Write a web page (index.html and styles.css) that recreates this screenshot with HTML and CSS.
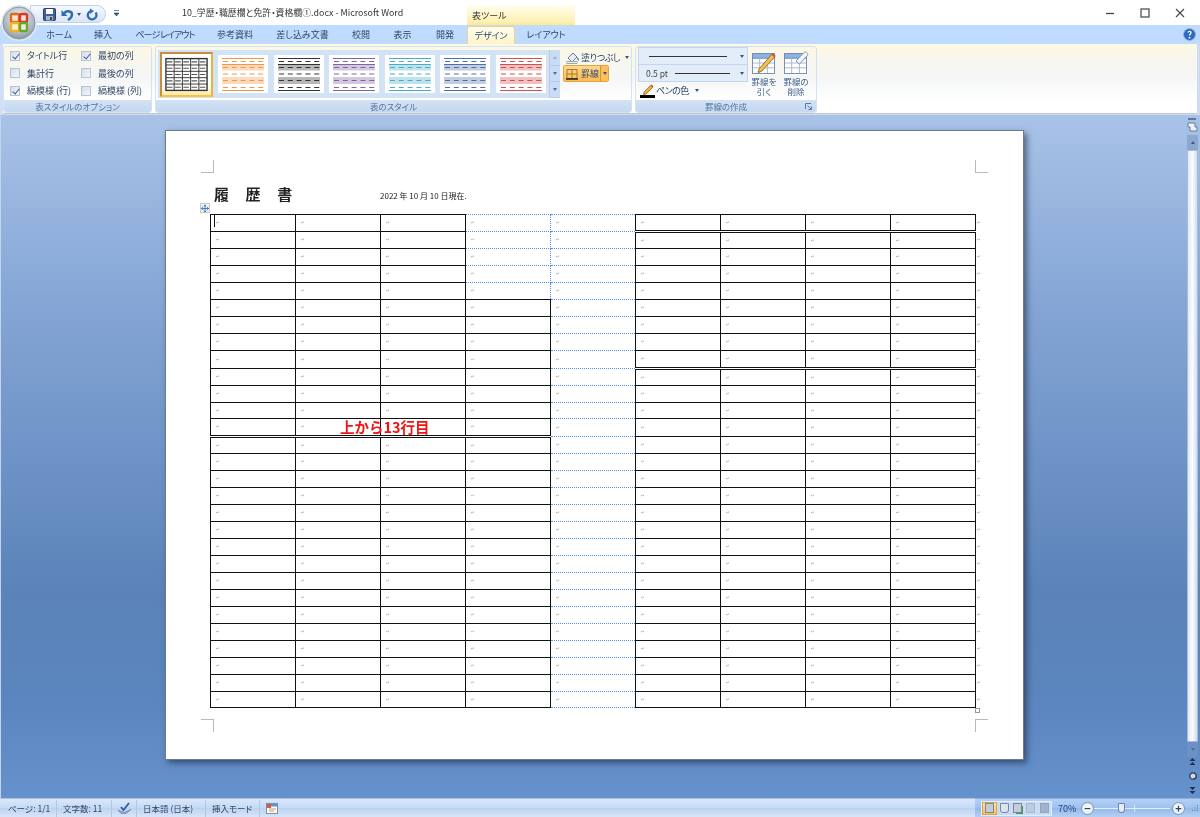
FILE: index.html
```html
<!DOCTYPE html>
<html lang="ja">
<head>
<meta charset="utf-8">
<title>10_学歴・職歴欄と免許・資格欄① - Microsoft Word</title>
<link rel="stylesheet" href="styles.css">
</head>
<body>
<svg class="defs" width="0" height="0" aria-hidden="true">
  <symbol id="banded" viewBox="0 0 50 38">
    <rect x="4" y="9" width="42" height="6.5" fill="currentColor" opacity=".35"/>
    <rect x="4" y="22" width="42" height="7" fill="currentColor" opacity=".35"/>
    <path d="M4 3.5H46M4 9.5H46M4 35.500H46" stroke="currentColor" fill="none"/>
    <path d="M5 6.500H46M5 12.500H46M5 19H46M5 25.500H46M5 32.500H46" stroke="currentColor" stroke-width="1.200" stroke-dasharray="5 3.800" fill="none"/>
  </symbol>
  <symbol id="grid" viewBox="0 0 24 22">
    <rect x=".5" y=".5" width="23" height="21" fill="#fff" stroke="#6f8fb5"/>
    <rect x=".5" y=".5" width="23" height="5" fill="#8fb2e0" stroke="#6f8fb5"/>
    <path d="M8 5V21M16 5V21M1 10.500H23M1 15.500H23" stroke="#a9b6c6" fill="none"/>
  </symbol>
</svg>

<header class="titlebar">
  <div class="qat">
    <svg class="qi" width="13" height="13" viewBox="0 0 13 13"><rect x=".5" y=".5" width="12" height="12" rx="1" fill="#3d5f9e" stroke="#2b3f70"/><rect x="3" y="1" width="7" height="5" fill="#fff"/><rect x="3" y="8" width="7" height="4.500" fill="#a9b4c6"/><rect x="7" y="9" width="2" height="3" fill="#33466e"/></svg>
    <svg class="qi undo" width="13" height="13" viewBox="0 0 13 13"><path d="M3 5.500C5 2 11 2.500 11 6.500C11 9 9.500 10.500 7 12" fill="none" stroke="#2f6db8" stroke-width="2.500"/><path d="M0.500 2V8H6.500Z" fill="#2f6db8"/></svg>
    <span class="caret qc"></span>
    <svg class="qi redo" width="12" height="13" viewBox="0 0 12 13"><path d="M9.500 4.500A4.300 4.300 0 1 1 5 3" fill="none" stroke="#2f6db8" stroke-width="2.300"/><path d="M4 .5V6L8 3Z" fill="#2f6db8"/></svg>
  </div>
  <svg class="qcust" width="7" height="9" viewBox="0 0 7 9"><path d="M1 1.500H6M1 4L3.500 7L6 4Z" fill="#3a5378" stroke="#3a5378" stroke-width=".7"/></svg>
  <div class="doc-title">10_学歴・職歴欄と免許・資格欄①.docx - Microsoft Word</div>
  <div class="ctx-tab">表ツール</div>
  <div class="win-btns">
    <svg width="10" height="10" viewBox="0 0 10 10"><path d="M1 5.500H9" stroke="#444" stroke-width="1.300"/></svg>
    <svg width="10" height="10" viewBox="0 0 10 10"><rect x="1" y="1" width="8" height="8" fill="none" stroke="#444" stroke-width="1.200"/></svg>
    <svg width="10" height="10" viewBox="0 0 10 10"><path d="M1 1L9 9M9 1L1 9" stroke="#444" stroke-width="1.100"/></svg>
  </div>
</header>

<button class="office" aria-label="Office">
  <svg width="38" height="38" viewBox="0 0 38 38">
    <defs>
      <radialGradient id="og" cx=".5" cy=".35" r=".7"><stop offset="0" stop-color="#f2f4f6"/><stop offset=".7" stop-color="#aab4be"/><stop offset="1" stop-color="#7f8c99"/></radialGradient>
    </defs>
    <circle cx="19" cy="19" r="18" fill="#dfe7f0"/>
    <circle cx="19" cy="19" r="16" fill="url(#og)" stroke="#8b97a6"/>
    <rect x="11" y="10" width="8" height="8" rx="1.500" fill="#fbe6d2" stroke="#e2671d" stroke-width="2.400"/>
    <rect x="20" y="10" width="7" height="8" rx="1.500" fill="#f8ded8" stroke="#d63a2a" stroke-width="2.400"/>
    <rect x="11" y="19" width="8" height="8" rx="1.500" fill="#fdf2cf" stroke="#f3b21c" stroke-width="2.400"/>
    <rect x="20" y="19" width="7" height="8" rx="1.500" fill="#e6f1d6" stroke="#6aa62e" stroke-width="2.400"/>
  </svg>
</button>

<nav class="tabs">
  <span class="tab">ホーム</span>
  <span class="tab">挿入</span>
  <span class="tab tab-tight">ページ レイアウト</span>
  <span class="tab">参考資料</span>
  <span class="tab">差し込み文書</span>
  <span class="tab">校閲</span>
  <span class="tab">表示</span>
  <span class="tab">開発</span>
  <span class="tab active">デザイン</span>
  <span class="tab">レイアウト</span>
  <span class="help"><svg width="13" height="13" viewBox="0 0 13 13"><circle cx="6.500" cy="6.500" r="6" fill="#2d6bc0" stroke="#9bb4d6"/><path d="M5 4.500C5.500 3 8 3 8 4.800C8 6 6.500 6 6.500 7.500" fill="none" stroke="#fff" stroke-width="1.300"/><circle cx="6.500" cy="9.700" r=".9" fill="#fff"/></svg></span>
</nav>

<section class="ribbon">
  <div class="group g-opts">
    <div class="g-body opts">
      <label class="opt"><i class="cb on"></i>タイトル行</label>
      <label class="opt"><i class="cb on"></i>最初の列</label>
      <label class="opt"><i class="cb"></i>集計行</label>
      <label class="opt"><i class="cb"></i>最後の列</label>
      <label class="opt"><i class="cb on"></i>縞模様 (行)</label>
      <label class="opt"><i class="cb"></i>縞模様 (列)</label>
    </div>
    <div class="g-label">表スタイルのオプション</div>
  </div>

  <div class="group g-styles">
    <div class="g-body styles">
      <div class="gallery">
        <div class="thumb selected">
          <svg width="46" height="36" viewBox="0 0 46 36">
            <rect x="1" y="1" width="44" height="34" fill="#fff" stroke="#333" stroke-width="1.500"/>
            <path d="M9.800 1V35M18.600 1V35M27.400 1V35M36.200 1V35M1 7.800H45M1 14.600H45M1 21.400H45M1 28.200H45" stroke="#333" fill="none"/>
            <path d="M2 4.500H45M2 11.300H45M2 18H45M2 24.800H45M2 31.600H45" stroke="#555" stroke-width="1.200" stroke-dasharray="6 2.800" fill="none"/>
          </svg>
        </div>
        <svg class="thumb c-orange"><use href="#banded"/></svg>
        <svg class="thumb c-black"><use href="#banded"/></svg>
        <svg class="thumb c-purple"><use href="#banded"/></svg>
        <svg class="thumb c-teal"><use href="#banded"/></svg>
        <svg class="thumb c-blue"><use href="#banded"/></svg>
        <svg class="thumb c-red"><use href="#banded"/></svg>
      </div>
      <div class="gal-scroll">
        <span class="gs"><i class="tri up"></i></span>
        <span class="gs"><i class="tri"></i></span>
        <span class="gs"><i class="tri more"></i></span>
      </div>
      <div class="shade-col">
        <div class="shade"><svg width="14" height="13" viewBox="0 0 14 13"><path d="M2 7L7 2L11 6L6 11Z" fill="#e8eef5" stroke="#6d7d90"/><path d="M11 6C13 7 13.500 9 12.500 10C11.500 9 11 8 11 6Z" fill="#4f81c0"/><rect x="1" y="10.500" width="10" height="2" fill="#eee" stroke="#9aa"/></svg><span class="shade-label">塗りつぶし</span><span class="caret"></span></div>
        <div class="border-btn">
          <span class="bb-main"><svg width="12" height="12" viewBox="0 0 12 12"><path d="M1 1.500H11V10.500H1ZM6 1.500V10.500M1 6H11" fill="none" stroke="#a77b2a"/><path d="M0 11H12" stroke="#222" stroke-width="1.500"/></svg>罫線</span>
          <span class="bb-arrow"><span class="caret"></span></span>
        </div>
      </div>
    </div>
    <div class="g-label">表のスタイル</div>
  </div>

  <div class="group g-draw">
    <div class="g-body draw">
      <div class="draw-left">
        <div class="dd"><i class="ln l1"></i><span class="caret"></span></div>
        <div class="dd"><span class="pt">0.5 pt</span><i class="ln l2"></i><span class="caret"></span></div>
        <div class="pen">
          <svg width="15" height="14" viewBox="0 0 15 14"><path d="M4 8L11 1L13 3L6 10L3.500 10.500Z" fill="#e9b33c" stroke="#8a5a1d" stroke-width=".7"/><path d="M11 1L13 3" stroke="#d2504a" stroke-width="1.500"/><rect x="0" y="11" width="15" height="3" fill="#000"/></svg>
          <span class="pen-label">ペンの色</span><span class="caret"></span>
        </div>
      </div>
      <div class="big-btn">
        <svg class="big-ic" width="25" height="25" viewBox="0 0 25 25"><use href="#grid" x="0" y="3" width="23" height="21"/><path d="M7 19L20 4L23 6.500L10 21L6 22.500Z" fill="#efc14e" stroke="#8a5a1d" stroke-width=".8"/><path d="M20 4L23 6.500" stroke="#d2504a" stroke-width="2"/></svg>
        <span>罫線を<br>引く</span>
      </div>
      <div class="big-btn">
        <svg class="big-ic" width="25" height="25" viewBox="0 0 25 25"><use href="#grid" x="0" y="3" width="23" height="21"/><path d="M12 11L20 2.500C21.500 1 25 4 23.500 5.500L15.500 14Z" fill="#f1f3f7" stroke="#8796a8"/></svg>
        <span>罫線の<br>削除</span>
      </div>
    </div>
    <div class="g-label">罫線の作成
      <svg class="launcher" width="7" height="7" viewBox="0 0 7 7"><path d="M.5 6V.5H6M2.500 2.500L6.500 6.500M6.500 3.500V6.500H3.500" fill="none" stroke="#5b7ba6"/></svg>
    </div>
  </div>
</section>

<main class="workspace">
  <div class="canvas">
    <article class="page">
      <i class="crop tl"></i><i class="crop tr"></i><i class="crop bl"></i><i class="crop br"></i>
      <div class="doc-head">
        <h1 class="doc-h1">履 歴 書</h1>
        <p class="doc-date">2022 年 10 月 10 日現在.</p>
      </div>
      <div class="table-wrap">
        <span class="move-handle"><svg width="9" height="9" viewBox="0 0 9 9"><path d="M4.500 .5V8.500M.5 4.500H8.500M3 2L4.500 .5L6 2M3 7L4.500 8.500L6 7M2 3L.5 4.500L2 6M7 3L8.500 4.500L7 6" fill="none" stroke="#2f6fc8"/></svg></span>
        <span class="caret-bar"></span>
        <span class="note">上から13行目</span>
        <span class="resize-handle"></span>
        <table class="sheet">
          <tr><td>↵</td><td>↵</td><td>↵</td><td class="d">↵</td><td class="d">↵</td><td class="db">↵</td><td class="db">↵</td><td class="db">↵</td><td class="db">↵</td><td class="e">↵</td></tr>
          <tr><td>↵</td><td>↵</td><td>↵</td><td class="d">↵</td><td class="d">↵</td><td>↵</td><td>↵</td><td>↵</td><td>↵</td><td class="e">↵</td></tr>
          <tr><td>↵</td><td>↵</td><td>↵</td><td class="d">↵</td><td class="d">↵</td><td>↵</td><td>↵</td><td>↵</td><td>↵</td><td class="e">↵</td></tr>
          <tr><td>↵</td><td>↵</td><td>↵</td><td class="d">↵</td><td class="d">↵</td><td>↵</td><td>↵</td><td>↵</td><td>↵</td><td class="e">↵</td></tr>
          <tr><td>↵</td><td>↵</td><td>↵</td><td class="d">↵</td><td class="d">↵</td><td>↵</td><td>↵</td><td>↵</td><td>↵</td><td class="e">↵</td></tr>
          <tr><td>↵</td><td>↵</td><td>↵</td><td>↵</td><td class="d">↵</td><td>↵</td><td>↵</td><td>↵</td><td>↵</td><td class="e">↵</td></tr>
          <tr><td>↵</td><td>↵</td><td>↵</td><td>↵</td><td class="d">↵</td><td>↵</td><td>↵</td><td>↵</td><td>↵</td><td class="e">↵</td></tr>
          <tr><td>↵</td><td>↵</td><td>↵</td><td>↵</td><td class="d">↵</td><td>↵</td><td>↵</td><td>↵</td><td>↵</td><td class="e">↵</td></tr>
          <tr class="tall"><td>↵</td><td>↵</td><td>↵</td><td>↵</td><td class="d">↵</td><td class="db">↵</td><td class="db">↵</td><td class="db">↵</td><td class="db">↵</td><td class="e">↵</td></tr>
          <tr><td>↵</td><td>↵</td><td>↵</td><td>↵</td><td class="d">↵</td><td>↵</td><td>↵</td><td>↵</td><td>↵</td><td class="e">↵</td></tr>
          <tr><td>↵</td><td>↵</td><td>↵</td><td>↵</td><td class="d">↵</td><td>↵</td><td>↵</td><td>↵</td><td>↵</td><td class="e">↵</td></tr>
          <tr class="short"><td>↵</td><td>↵</td><td>↵</td><td>↵</td><td class="d">↵</td><td>↵</td><td>↵</td><td>↵</td><td>↵</td><td class="e">↵</td></tr>
          <tr class="tall"><td class="db">↵</td><td class="db">↵</td><td class="db">↵</td><td class="db">↵</td><td class="d">↵</td><td>↵</td><td>↵</td><td>↵</td><td>↵</td><td class="e">↵</td></tr>
          <tr><td>↵</td><td>↵</td><td>↵</td><td>↵</td><td class="d">↵</td><td>↵</td><td>↵</td><td>↵</td><td>↵</td><td class="e">↵</td></tr>
          <tr><td>↵</td><td>↵</td><td>↵</td><td>↵</td><td class="d">↵</td><td>↵</td><td>↵</td><td>↵</td><td>↵</td><td class="e">↵</td></tr>
          <tr><td>↵</td><td>↵</td><td>↵</td><td>↵</td><td class="d">↵</td><td>↵</td><td>↵</td><td>↵</td><td>↵</td><td class="e">↵</td></tr>
          <tr><td>↵</td><td>↵</td><td>↵</td><td>↵</td><td class="d">↵</td><td>↵</td><td>↵</td><td>↵</td><td>↵</td><td class="e">↵</td></tr>
          <tr><td>↵</td><td>↵</td><td>↵</td><td>↵</td><td class="d">↵</td><td>↵</td><td>↵</td><td>↵</td><td>↵</td><td class="e">↵</td></tr>
          <tr><td>↵</td><td>↵</td><td>↵</td><td>↵</td><td class="d">↵</td><td>↵</td><td>↵</td><td>↵</td><td>↵</td><td class="e">↵</td></tr>
          <tr><td>↵</td><td>↵</td><td>↵</td><td>↵</td><td class="d">↵</td><td>↵</td><td>↵</td><td>↵</td><td>↵</td><td class="e">↵</td></tr>
          <tr><td>↵</td><td>↵</td><td>↵</td><td>↵</td><td class="d">↵</td><td>↵</td><td>↵</td><td>↵</td><td>↵</td><td class="e">↵</td></tr>
          <tr><td>↵</td><td>↵</td><td>↵</td><td>↵</td><td class="d">↵</td><td>↵</td><td>↵</td><td>↵</td><td>↵</td><td class="e">↵</td></tr>
          <tr><td>↵</td><td>↵</td><td>↵</td><td>↵</td><td class="d">↵</td><td>↵</td><td>↵</td><td>↵</td><td>↵</td><td class="e">↵</td></tr>
          <tr><td>↵</td><td>↵</td><td>↵</td><td>↵</td><td class="d">↵</td><td>↵</td><td>↵</td><td>↵</td><td>↵</td><td class="e">↵</td></tr>
          <tr><td>↵</td><td>↵</td><td>↵</td><td>↵</td><td class="d">↵</td><td>↵</td><td>↵</td><td>↵</td><td>↵</td><td class="e">↵</td></tr>
          <tr><td>↵</td><td>↵</td><td>↵</td><td>↵</td><td class="d">↵</td><td>↵</td><td>↵</td><td>↵</td><td>↵</td><td class="e">↵</td></tr>
          <tr><td>↵</td><td>↵</td><td>↵</td><td>↵</td><td class="d">↵</td><td>↵</td><td>↵</td><td>↵</td><td>↵</td><td class="e">↵</td></tr>
          <tr><td>↵</td><td>↵</td><td>↵</td><td>↵</td><td class="d">↵</td><td>↵</td><td>↵</td><td>↵</td><td>↵</td><td class="e">↵</td></tr>
          <tr class="short"><td>↵</td><td>↵</td><td>↵</td><td>↵</td><td class="d">↵</td><td>↵</td><td>↵</td><td>↵</td><td>↵</td><td class="e">↵</td></tr>
        </table>
      </div>
    </article>
  </div>
  <aside class="vscroll">
    <svg class="ruler" width="11" height="14" viewBox="0 0 11 14"><path d="M1 1H9" stroke="#4a5f7d" stroke-width="1.500"/><path d="M1 5H8V9H10V13H3V9H1Z" fill="#eef2f7" stroke="#6a7c94"/></svg>
    <span class="sb-btn"><i class="tri up dark"></i></span>
    <span class="sb-thumb"></span>
    <span class="sb-btn"><i class="tri dark"></i></span>
    <div class="browse">
      <svg width="7" height="8" viewBox="0 0 7 8"><path d="M3.500 0L6.500 3H.5ZM3.500 4L6.500 7H.5Z" fill="#1d2f4a"/></svg>
      <svg width="8" height="8" viewBox="0 0 8 8"><circle cx="4" cy="4" r="3.200" fill="#cfd8e4" stroke="#2a3a52" stroke-width="1.300"/></svg>
      <svg width="7" height="8" viewBox="0 0 7 8"><path d="M3.500 4L.5 1H6.500ZM3.500 8L.5 5H6.500Z" fill="#1d2f4a"/></svg>
    </div>
  </aside>
</main>

<footer class="status">
  <div class="st-left">
    <span class="st st-page">ページ: 1/1</span>
    <span class="st st-words">文字数: 11</span>
    <span class="st st-check"><svg width="15" height="12" viewBox="0 0 15 12"><path d="M1 8L7 10.500L14 7.500L9 11.500H4Z" fill="#9fb3cc" stroke="#5e7694" stroke-width=".6"/><path d="M4 5L6.500 8L12 1" fill="none" stroke="#2f5d9d" stroke-width="1.800"/></svg></span>
    <span class="st st-lang">日本語 (日本)</span>
    <span class="st st-mode">挿入モード</span>
    <span class="st st-macro"><svg width="12" height="11" viewBox="0 0 12 11"><rect x=".5" y=".5" width="11" height="10" fill="#fff" stroke="#7b8ea8"/><rect x=".5" y=".5" width="11" height="3" fill="#5b93d6"/><rect x="1" y="1" width="4" height="4" fill="#e2563a"/><path d="M3 6H10M3 8H8" stroke="#c6a04e"/></svg></span>
  </div>
  <div class="st-right">
    <div class="views">
      <span class="view on"><i class="vi"></i></span>
      <span class="view"><i class="vi book"></i></span>
      <span class="view"><i class="vi web"></i></span>
      <span class="view"><i class="vi out"></i></span>
      <span class="view"><i class="vi draft"></i></span>
    </div>
    <span class="zoom-pct">70%</span>
    <span class="zbtn">−</span>
    <span class="slider"><i class="s-thumb"></i><i class="s-tick"></i></span>
    <span class="zbtn">+</span>
    <svg class="grip" width="9" height="9" viewBox="0 0 9 9"><path d="M7 1h1v1H7zM4.500 3.500h1v1h-1zM7 3.500h1v1H7zM2 6h1v1H2zM4.500 6h1v1h-1zM7 6h1v1H7z" fill="#5a7aa6"/></svg>
  </div>
</footer>
</body>
</html>
```

FILE: styles.css
```css
* { box-sizing: border-box; }
html { background: #fff; }
html, body { margin: 0; height: 100%; }
body {
  position: relative;
  width: 1200px;
  height: 817px;
  overflow: hidden;
  display: flex;
  flex-direction: column;
  background: #fff;
  font-family: "Noto Sans CJK JP", "Noto Sans", sans-serif;
  font-feature-settings: "palt";
  font-size: 9px;
  color: #2f4667;
  filter: blur(.4px);
}
.defs { position: absolute; }

/* title bar */
.titlebar {
  height: 25px;
  flex: none;
  display: flex;
  align-items: flex-start;
  background: #fff;
}
.qat {
  width: 76px;
  height: 18px;
  margin: 5px 0 0 30px;
  padding-left: 12px;
  display: flex;
  align-items: center;
  background: linear-gradient(#f6f9fd, #dbe6f5);
  border: 1px solid #c3d2e7;
  border-radius: 0 9px 9px 0;
}
.qi { flex: none; }
.undo { margin-left: 5px; }
.qc { margin-left: 3px; }
.redo { margin-left: 5px; }
.qcust { margin: 9px 0 0 7px; flex: none; }
.doc-title {
  width: 285px;
  margin: 6px 0 0 62px;
  line-height: 14px;
  font-size: 8.900px;
  color: #333;
  white-space: nowrap;
}
.ctx-tab {
  width: 108px;
  height: 20px;
  margin-top: 5px;
  padding: 4px 0 0 5px;
  line-height: 13px;
  background: linear-gradient(#fffdf0, #fdf0b0 85%, #fde88a);
  color: #333;
  font-size: 9px;
}
.win-btns {
  margin-left: auto;
  padding: 8px 15px 0 0;
  display: flex;
  gap: 25px;
}

/* office button */
.office {
  position: absolute;
  left: 0;
  top: 4px;
  width: 38px;
  height: 38px;
  padding: 0;
  border: 0;
  background: none;
}

/* tabs */
.tabs {
  height: 19px;
  flex: none;
  padding-left: 37px;
  display: grid;
  grid-template-columns: 44px 44px 80px 60px 75px 42px 41px 44px 48px 62px 1fr;
  background: #bfdbff;
}
.tab {
  text-align: center;
  line-height: 20px;
  white-space: nowrap;
  color: #2f4667;
}
.tab-tight { letter-spacing: -1px; }
.tab.active {
  margin-top: 1px;
  line-height: 18px;
  background: linear-gradient(#fffdf0, #fdf3c6);
  border: 1px solid #e9d48c;
  border-bottom: 0;
  border-radius: 3px 3px 0 0;
}
.tab:last-of-type { background: linear-gradient(90deg, #c6daf6, #bfdbff); }
.help { justify-self: end; padding: 3px 4px 0 0; }

/* ribbon */
.ribbon {
  height: 71px;
  flex: none;
  padding: 2px 0 1px 3px;
  display: flex;
  gap: 3px;
  background: linear-gradient(#fdf9e2, #f7f6ef 25%, #f5f6f6 50%, #fff 80%);
  border: 1px solid #c4d4e8;
  border-width: 0 3px 1px 0;
  border-color: #cddcf0;
  box-shadow: inset 3px 0 #cfe0f6, inset 0 -1px #c3c9d1;
}
.group {
  display: flex;
  flex-direction: column;
  border: 1px solid #d5e2f2;
  border-radius: 3px;
  overflow: hidden;
}
.g-opts { width: 149px; }
.g-styles { width: 477px; }
.g-draw { width: 182px; }
.g-body { height: 53px; flex: none; }
.g-label {
  position: relative;
  flex: 1;
  text-align: center;
  line-height: 13px;
  font-size: 8.500px;
  color: #55749f;
  background: linear-gradient(#d3e2f4, #c3d7f0);
}
.launcher { position: absolute; right: 4px; top: 3px; }

/* options */
.opts {
  padding: 0 0 0 6px;
  display: grid;
  grid-template-columns: 71px 1fr;
  grid-auto-rows: 17.500px;
}
.opt {
  display: flex;
  align-items: center;
  gap: 7px;
  white-space: nowrap;
}
.cb {
  position: relative;
  width: 10px;
  height: 10px;
  flex: none;
  background: linear-gradient(135deg, #d5dde8, #f4f7fb);
  border: 1px solid #b5c3d5;
}
.cb.on::after {
  content: "";
  position: absolute;
  left: 2.500px;
  top: 0;
  width: 3px;
  height: 6px;
  border: solid #3a5f93;
  border-width: 0 1.300px 1.300px 0;
  transform: rotate(40deg);
}

/* styles group */
.styles {
  padding: 3px 0 0 2px;
  display: flex;
}
.gallery {
  width: 392px;
  height: 48px;
  padding-left: 2px;
  display: flex;
  align-items: center;
  gap: 5.450px;
  background: #d3e3f6;
}
.thumb {
  flex: none;
  width: 50px;
  height: 38px;
  background: #fff;
  display: block;
}
.thumb.selected {
  width: 53px;
  height: 45px;
  padding: 3px 3px;
  background: linear-gradient(#fff, #fff 75%, #ffe9a8);
  border: 2px solid;
  border-color: #c98d3f #eeb23c #f8c23e #c98d3f;
}
.thumb.selected svg { display: block; width: 100%; height: 100%; }
.c-orange { color: #f79646; }
.c-black { color: #333; }
.c-purple { color: #8064a2; }
.c-teal { color: #4bacc6; }
.c-blue { color: #4f6fa8; }
.c-red { color: #d0504d; }
.gal-scroll {
  width: 11px;
  height: 48px;
  margin-left: -1px;
  display: flex;
  flex-direction: column;
  background: #c9dcf3;
  border-left: 1px solid #b6cde9;
}
.gs {
  flex: 1;
  display: flex;
  align-items: center;
  justify-content: center;
  border-bottom: 1px solid #b6cde9;
}
.tri {
  width: 0;
  height: 0;
  border: 2.500px solid transparent;
  border-bottom-width: 0;
  border-top: 3px solid #4e6f9f;
}
.tri.up { border-top-width: 0; border-bottom: 3px solid #9eb0c7; }
.tri.more { box-shadow: 0 -3px 0 -2px #4e6f9f; }
.tri.dark { border-top-color: #506d96; }
.tri.up.dark { border-bottom-color: #3f5a80; }
.shade-col { margin-left: 3px; flex: 1; }
.shade {
  display: flex;
  align-items: center;
  height: 15px;
  padding-left: 3px;
  gap: 1px;
  white-space: nowrap;
}
.shade-label { letter-spacing: -.4px; }
.shade .caret { margin-left: 4px; }
.border-btn {
  display: flex;
  width: 46px;
  height: 17px;
  border: 1px solid #e6a43c;
  border-radius: 2px;
  background: linear-gradient(#fdd88f, #fbbc55);
}
.bb-main {
  flex: 1;
  display: flex;
  align-items: center;
  gap: 3px;
  padding-left: 2px;
  white-space: nowrap;
}
.bb-arrow {
  width: 8px;
  display: flex;
  align-items: center;
  justify-content: center;
  border-left: 1px solid #d6923a;
  background: #fbc05c;
}
.caret {
  display: inline-block;
  flex: none;
  width: 0;
  height: 0;
  border: 2.500px solid transparent;
  border-bottom-width: 0;
  border-top: 3px solid #3b5477;
}

/* draw group */
.draw {
  padding: 0 0 0 2px;
  display: flex;
}
.draw-left { width: 110px; flex: none; }
.dd {
  display: flex;
  align-items: center;
  height: 18px;
  padding: 0 3px 0 7px;
  background: #e3edf9;
  border: 1px solid #c3d6ee;
  margin-bottom: -1px;
  color: #444;
}
.dd:nth-child(2) { margin-bottom: 0; }
.ln { display: block; height: 1px; background: #333; }
.l1 { width: 78px; margin: 0 auto 0 3px; }
.l2 { width: 55px; margin: 0 auto 0 7px; }
.pt { font-size: 8.500px; }
.pen {
  display: flex;
  align-items: center;
  gap: 1px;
  height: 17px;
  padding-left: 2px;
}
.pen-label { letter-spacing: -.5px; }
.pen .caret { margin-left: 5px; }
.big-btn {
  width: 32px;
  flex: none;
  padding-top: 3px;
  font-size: 8.500px;
  line-height: 9.500px;
  text-align: center;
  color: #3f5f8c;
}
.big-btn span { display: block; margin-top: 2px; }
.big-ic { display: block; margin: 0 auto; }

/* workspace */
.workspace {
  flex: 1;
  min-height: 0;
  display: flex;
  background: linear-gradient(#a9c3e7 0, #84a5d5 28%, #5b83b9 70%, #5b85be 85%, #6591cc 100%);
}
.canvas {
  flex: 1;
  padding: 15px 0 0 165px;
  border-left: 1px solid #c3d5ec;
}
.page {
  position: relative;
  width: 859px;
  height: 630px;
  margin-left: -1px;
  padding: 54px 0 0 44px;
  background: #fff;
  border: 1px solid #6f7a88;
  box-shadow: 3px 3px 6px rgba(20, 30, 50, .55);
}
.crop { position: absolute; width: 13px; height: 13px; border: solid #b9b9b9; }
.tl { left: 35px; top: 29px; border-width: 0 1px 1px 0; }
.tr { left: 809px; top: 29px; border-width: 0 0 1px 1px; }
.bl { left: 35px; top: 588px; border-width: 1px 1px 0 0; }
.br { left: 809px; top: 588px; border-width: 1px 0 0 1px; }
.doc-head {
  height: 29px;
  display: flex;
  align-items: flex-start;
  padding-left: 4px;
  color: #222;
}
.doc-h1 {
  width: 166px;
  margin: 0;
  font-size: 15px;
  line-height: 18px;
  font-weight: 700;
  letter-spacing: 6.600px;
  font-feature-settings: normal;
  white-space: nowrap;
}
.doc-date {
  margin: 5px 0 0;
  font-size: 8px;
  line-height: 12px;
  font-feature-settings: normal;
  white-space: nowrap;
}
.table-wrap { position: relative; }
.move-handle {
  position: absolute;
  left: -10px;
  top: -11px;
  width: 10px;
  height: 10px;
  display: flex;
  background: #f2f2f2;
  border: 1px solid #c9c9c9;
}
.caret-bar {
  position: absolute;
  left: 4px;
  top: 1px;
  width: 1px;
  height: 12px;
  background: #111;
}
.note {
  position: absolute;
  left: 130px;
  top: 203px;
  font-size: 14.500px;
  line-height: 20px;
  font-weight: 700;
  font-feature-settings: normal;
  color: #f01414;
  white-space: nowrap;
}
.resize-handle {
  position: absolute;
  left: 765px;
  top: 494px;
  width: 5px;
  height: 5px;
  border: 1px solid #999;
  background: #fff;
}
.sheet {
  width: 779px;
  table-layout: fixed;
  border-collapse: collapse;
  border-spacing: 0;
}
.sheet tr { height: 17px; }
.sheet tr.tall { height: 18px; }
.sheet tr.short { height: 16px; }
.sheet td {
  width: 85px;
  padding: 0 0 0 5px;
  border: 1px solid #111;
  font-family: "DejaVu Sans", sans-serif;
  font-size: 4.500px;
  line-height: 8px;
  color: #8a8a8a;
  vertical-align: middle;
}
.sheet td.d { border: 1px dotted #4f8eed; }
.sheet td.db { border-bottom: 3px double #111; }
.sheet td.e { width: 14px; padding-left: 1px; border: 0; }

/* scrollbar */
.vscroll {
  width: 16px;
  flex: none;
  padding: 3px 2px 4px 3px;
  display: flex;
  flex-direction: column;
  align-items: stretch;
}
.ruler { margin-bottom: 3px; flex: none; }
.sb-btn {
  height: 15px;
  flex: none;
  display: flex;
  align-items: center;
  justify-content: center;
  background: rgba(120, 150, 195, .55);
}
.sb-thumb {
  flex: 1;
  background: linear-gradient(90deg, #dfe8f4, #fbfcfe 50%, #cfdcec);
  border: 1px solid #a8bcd6;
  border-radius: 1px;
}
.browse {
  height: 36px;
  margin-top: 1px;
  flex: none;
  display: flex;
  flex-direction: column;
  align-items: center;
  justify-content: space-between;
}

/* status bar */
.status {
  height: 19px;
  flex: none;
  display: flex;
  font-size: 8.500px;
  color: #2f4667;
}
.st-left {
  flex: 1;
  display: flex;
  align-items: center;
  background: linear-gradient(#d9e7f9, #c6daf4 50%, #bcd3f0 51%, #d7e6f9);
  border-top: 1px solid #a9c4e6;
}
.st {
  height: 17px;
  display: flex;
  align-items: center;
  white-space: nowrap;
  border-right: 1px solid #b0c7e5;
}
.st-page { width: 57px; padding-left: 8px; }
.st-words { width: 55px; padding-left: 6px; }
.st-check { width: 25px; padding-left: 5px; }
.st-lang { width: 69px; padding-left: 6px; }
.st-mode { width: 54px; padding-left: 6px; }
.st-macro { padding-left: 6px; border-right: 0; }
.st-right {
  width: 225px;
  display: flex;
  align-items: center;
  padding-left: 6px;
  background: linear-gradient(#b4d0f4, #9fc1ee 50%, #92b8ea 51%, #b5d0f4);
  border-top: 1px solid #8fb0de;
}
.views {
  width: 71px;
  height: 15px;
  display: flex;
  align-items: stretch;
  background: #c9dcf5;
  border: 1px solid #e2edfb;
}
.view { flex: 1; display: flex; align-items: center; justify-content: center; }
.view.on { background: linear-gradient(#fde4a5, #fbc14f); border: 1px solid #e2a53b; }
.vi { display: block; width: 9px; height: 10px; background: #c3ccd8; border: 1px solid #77889f; }
.vi.book { border-radius: 0 0 3px 3px; background: #dde4ee; }
.vi.web { box-shadow: 2px 2px 0 -1px #3c9a5a; }
.vi.out { background: #bccde2; border-color: #aab9cc; }
.vi.draft { background: #9fb3cc; border-color: #92a6c0; }
.zoom-pct {
  width: 21px;
  margin-left: 6px;
  color: #20407a;
  font-size: 9px;
  white-space: nowrap;
}
.zbtn {
  width: 13px;
  height: 13px;
  display: flex;
  align-items: center;
  justify-content: center;
  margin-left: 2px;
  font-size: 11px;
  line-height: 1;
  font-weight: 700;
  color: #2d4466;
  background: radial-gradient(#fff, #d8e4f2);
  border: 1px solid #8097b6;
  border-radius: 50%;
}
.slider {
  position: relative;
  width: 76px;
  height: 1px;
  background: #e7effa;
}
.s-thumb {
  position: absolute;
  left: 24px;
  top: -5px;
  width: 7px;
  height: 10px;
  background: #e4ecf7;
  border: 1px solid #6d86a8;
  border-radius: 1px 1px 4px 4px;
}
.s-tick { position: absolute; left: 40px; top: -3px; width: 1px; height: 7px; background: #dbe6f5; }
.grip { margin-left: auto; margin-right: 1px; }
```
